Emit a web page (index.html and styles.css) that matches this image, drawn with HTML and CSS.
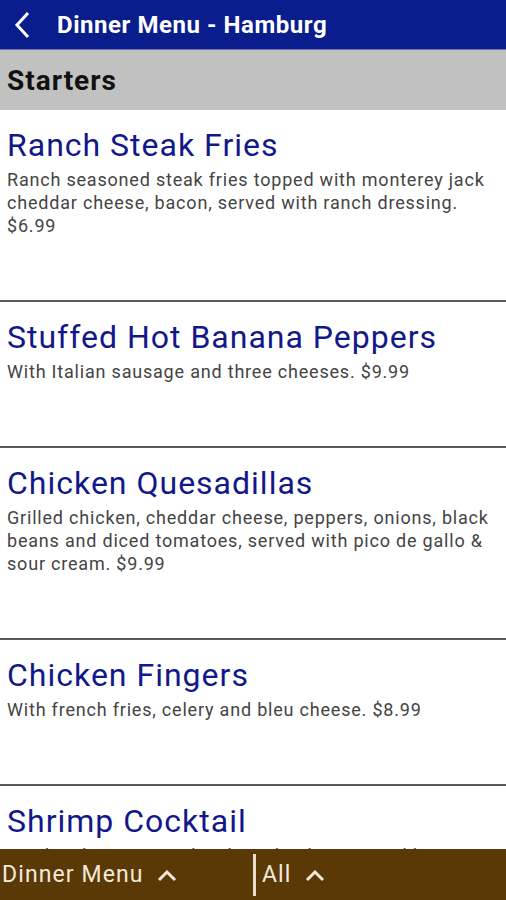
FILE: index.html
```html
<!DOCTYPE html>
<html lang="en">
  <head>
    <meta charset="UTF-8" />
    <meta name="viewport" content="width=device-width, initial-scale=1.0" />
    <title>Dinner Menu - Hamburg</title>
    <link rel="stylesheet" href="styles.css">
  </head>
  <body>
    <header class="app-bar">
      <svg class="back" width="20" height="30" viewBox="0 0 20 30">
        <path d="M16 3 L5 15 L16 27" fill="none" stroke="#fff" stroke-width="3" />
      </svg>
      <h1>Dinner Menu - Hamburg</h1>
    </header>

    <div class="section">Starters</div>

    <ul class="menu">
      <li class="item">
        <h2>Ranch Steak Fries</h2>
        <p>Ranch seasoned steak fries topped with monterey jack cheddar cheese, bacon, served with ranch dressing. $6.99</p>
      </li>
      <li class="item">
        <h2>Stuffed Hot Banana Peppers</h2>
        <p>With Italian sausage and three cheeses. $9.99</p>
      </li>
      <li class="item">
        <h2>Chicken Quesadillas</h2>
        <p>Grilled chicken, cheddar cheese, peppers, onions, black beans and diced tomatoes, served with pico de gallo &amp; sour cream. $9.99</p>
      </li>
      <li class="item">
        <h2>Chicken Fingers</h2>
        <p>With french fries, celery and bleu cheese. $8.99</p>
      </li>
      <li class="item">
        <h2>Shrimp Cocktail</h2>
        <p>Jumbo shrimp served with cocktail sauce and lemon. $11.99</p>
      </li>
    </ul>

    <footer class="bottom-bar">
      <div class="picker">
        Dinner Menu
        <svg width="22" height="14" viewBox="0 0 22 14">
          <path d="M3 12 L11 4 L19 12" fill="none" stroke="#f3ead9" stroke-width="3" />
        </svg>
      </div>
      <div class="picker second">
        All
        <svg width="22" height="14" viewBox="0 0 22 14">
          <path d="M3 12 L11 4 L19 12" fill="none" stroke="#f3ead9" stroke-width="3" />
        </svg>
      </div>
    </footer>
  </body>
</html>
```

FILE: styles.css
```css
body {
  margin: 0;
  font-family: Roboto, Arial, sans-serif;
  background: #fff;
  height: 900px;
  overflow: hidden;
}
.app-bar {
  height: 49px;
  background-color: #0a1d8d;
  display: flex;
  align-items: center;
  padding-left: 12px;
  border-bottom: 1px solid #6e74b0;
}
.back {
  margin-right: 25px;
}
.app-bar h1 {
  margin: 0;
  color: #fff;
  font-size: 24px;
  font-weight: bold;
  letter-spacing: 0.55px;
}
.section {
  height: 60px;
  background-color: #c1c1c1;
  display: flex;
  align-items: center;
  padding-left: 7px;
  font-size: 28px;
  font-weight: bold;
  letter-spacing: 1px;
  color: #111;
}
.menu {
  list-style: none;
  margin: 0;
  padding: 0;
}
.item {
  padding: 15px 7px 63px;
  border-bottom: 2px solid #5a5a5a;
}
.item h2 {
  margin: 0 0 3px;
  font-size: 32px;
  line-height: 40px;
  font-weight: normal;
  letter-spacing: 1px;
  color: #12188a;
}
.item p {
  margin: 0;
  font-size: 18px;
  line-height: 23px;
  letter-spacing: 0.8px;
  color: #444;
}
.bottom-bar {
  position: fixed;
  left: 0;
  right: 0;
  bottom: 0;
  height: 51px;
  background-color: #5b3906;
  display: flex;
  align-items: center;
  color: #f3ead9;
  font-size: 23px;
  letter-spacing: 1.1px;
}
.picker {
  display: flex;
  align-items: center;
  gap: 12px;
  width: 251px;
  padding-left: 2px;
}
.picker.second {
  border-left: 3px solid #e8dccb;
  height: 42px;
  padding-left: 6px;
  width: auto;
}
```
